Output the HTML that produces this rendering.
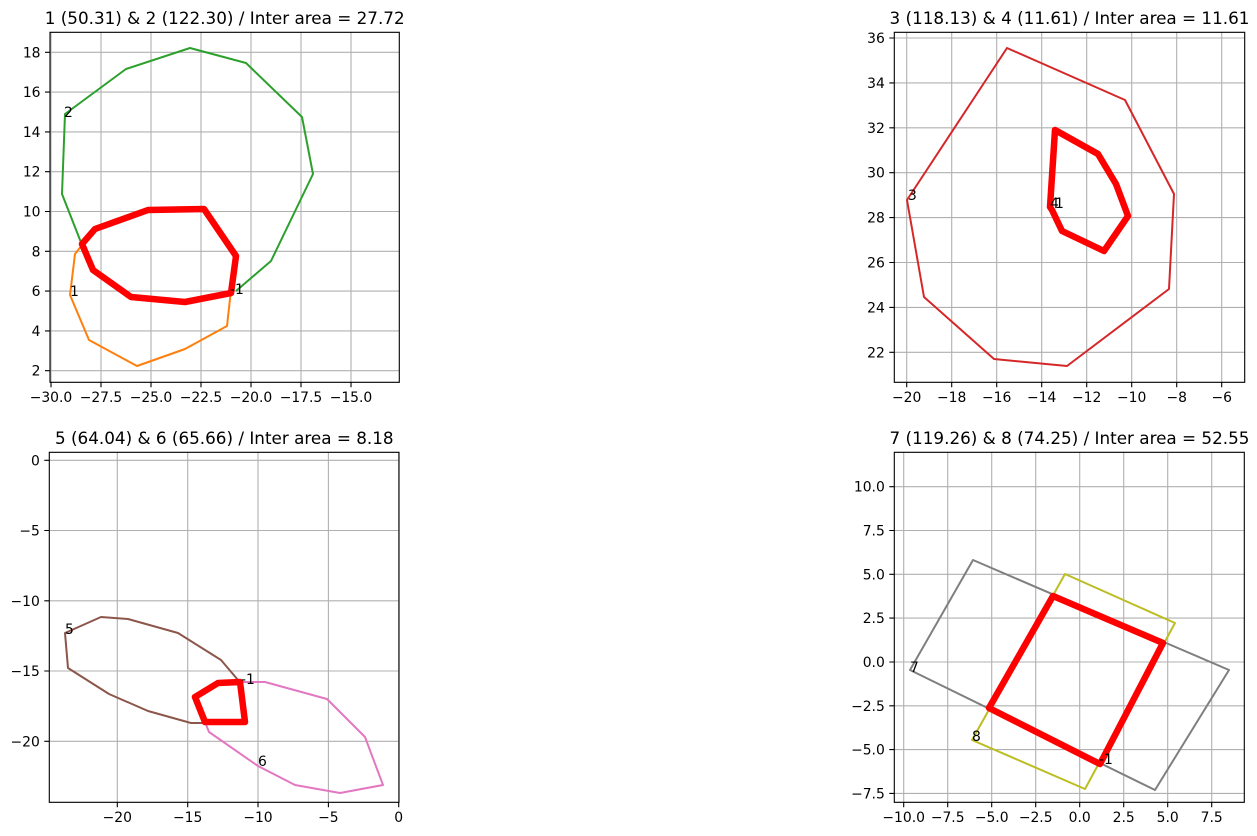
<!DOCTYPE html>
<html><head><meta charset="utf-8"><style>
html,body{margin:0;padding:0;background:#fff;}
svg{display:block;}
text{font-family:"DejaVu Sans","Liberation Sans",sans-serif;fill:#000;}
.t{font-size:16.8px;text-anchor:middle;}
.xl{font-size:13.9px;text-anchor:middle;}
.yl{font-size:13.9px;text-anchor:end;}
.a{font-size:13.9px;}
.g{stroke:#b0b0b0;stroke-width:1.1;fill:none;}
.k{stroke:#000;stroke-width:1.1;fill:none;}
.p{fill:none;stroke-width:2;stroke-linejoin:round;}
.r{fill:none;stroke:#ff0000;stroke-width:6.5;stroke-linejoin:round;}
</style></head><body>
<svg width="1257" height="836" viewBox="0 0 1257 836" xmlns="http://www.w3.org/2000/svg">
<!-- Subplot 1 -->
<text class="t" x="224.7" y="24">1 (50.31) &amp; 2 (122.30) / Inter area = 27.72</text>
<path class="g" d="M51 32.3V382.3M101 32.3V382.3M151 32.3V382.3M201 32.3V382.3M251 32.3V382.3M301 32.3V382.3M351 32.3V382.3M50 370.7H399.3M50 330.9H399.3M50 291.1H399.3M50 251.3H399.3M50 211.5H399.3M50 171.7H399.3M50 131.9H399.3M50 92.1H399.3M50 52.3H399.3"/>
<path class="p" stroke="#2ca02c" d="M82 245L62 194L65 114L126 69L190 48L246 63L302 117L313 174L271 261L236 291"/>
<path class="p" stroke="#ff7f0e" d="M82 245L75 254L70 295L89 340L137 366L185 349L227 326L231 290"/>
<path class="r" d="M148 210L204 209L236 256L231 293L185 302L131 297L93 270L82 244L95 229Z"/>
<text class="a" x="64" y="117">2</text><text class="a" x="70" y="296">1</text><text class="a" x="230" y="294">-1</text>
<path class="k" d="M50 32.3H399.3V382.3H50Z"/>
<path class="k" d="M51 382.3v5M101 382.3v5M151 382.3v5M201 382.3v5M251 382.3v5M301 382.3v5M351 382.3v5M50 370.7h-5M50 330.9h-5M50 291.1h-5M50 251.3h-5M50 211.5h-5M50 171.7h-5M50 131.9h-5M50 92.1h-5M50 52.3h-5"/>
<text class="xl" x="51" y="402">−30.0</text><text class="xl" x="101" y="402">−27.5</text><text class="xl" x="151" y="402">−25.0</text><text class="xl" x="201" y="402">−22.5</text><text class="xl" x="251" y="402">−20.0</text><text class="xl" x="301" y="402">−17.5</text><text class="xl" x="351" y="402">−15.0</text>
<text class="yl" x="40.5" y="375.7">2</text><text class="yl" x="40.5" y="335.9">4</text><text class="yl" x="40.5" y="296.1">6</text><text class="yl" x="40.5" y="256.3">8</text><text class="yl" x="40.5" y="216.5">10</text><text class="yl" x="40.5" y="176.7">12</text><text class="yl" x="40.5" y="136.9">14</text><text class="yl" x="40.5" y="97.1">16</text><text class="yl" x="40.5" y="57.3">18</text>

<!-- Subplot 2 -->
<text class="t" x="1069.5" y="24">3 (118.13) &amp; 4 (11.61) / Inter area = 11.61</text>
<path class="g" d="M906.7 32.3V382.3M951.7 32.3V382.3M996.7 32.3V382.3M1041.7 32.3V382.3M1086.7 32.3V382.3M1131.7 32.3V382.3M1176.7 32.3V382.3M1221.7 32.3V382.3M894.3 352.3H1244.7M894.3 307.4H1244.7M894.3 262.5H1244.7M894.3 217.6H1244.7M894.3 172.7H1244.7M894.3 127.8H1244.7M894.3 82.9H1244.7M894.3 38H1244.7"/>
<path class="p" stroke="#d62728" d="M1007 48L1125 100L1174 194L1169 289L1067 366L994 359L924 297L907 200Z"/>
<path class="r" d="M1055 130L1098 154L1116 184L1128 216L1104 251L1062 231L1052 210L1050 207Z"/>
<text class="a" x="908" y="200">3</text><text class="a" x="1050" y="208">4</text><text class="a" x="1055" y="208">1</text>
<path class="k" d="M894.3 32.3H1244.7V382.3H894.3Z"/>
<path class="k" d="M906.7 382.3v5M951.7 382.3v5M996.7 382.3v5M1041.7 382.3v5M1086.7 382.3v5M1131.7 382.3v5M1176.7 382.3v5M1221.7 382.3v5M894.3 352.3h-5M894.3 307.4h-5M894.3 262.5h-5M894.3 217.6h-5M894.3 172.7h-5M894.3 127.8h-5M894.3 82.9h-5M894.3 38h-5"/>
<text class="xl" x="906.7" y="402">−20</text><text class="xl" x="951.7" y="402">−18</text><text class="xl" x="996.7" y="402">−16</text><text class="xl" x="1041.7" y="402">−14</text><text class="xl" x="1086.7" y="402">−12</text><text class="xl" x="1131.7" y="402">−10</text><text class="xl" x="1176.7" y="402">−8</text><text class="xl" x="1221.7" y="402">−6</text>
<text class="yl" x="884.8" y="357.3">22</text><text class="yl" x="884.8" y="312.4">24</text><text class="yl" x="884.8" y="267.5">26</text><text class="yl" x="884.8" y="222.6">28</text><text class="yl" x="884.8" y="177.7">30</text><text class="yl" x="884.8" y="132.8">32</text><text class="yl" x="884.8" y="87.9">34</text><text class="yl" x="884.8" y="43">36</text>

<!-- Subplot 3 -->
<text class="t" x="224.3" y="444">5 (64.04) &amp; 6 (65.66) / Inter area = 8.18</text>
<path class="g" d="M117.3 452.3V802.3M187.7 452.3V802.3M258 452.3V802.3M328.4 452.3V802.3M398.7 452.3V802.3M49.3 460.3H399M49.3 530.5H399M49.3 600.8H399M49.3 671H399M49.3 741.3H399"/>
<path class="p" stroke="#8c564b" d="M238 680L221 660L178 633L128 619L101 617L65 633L68 668L109 694L148 711L191 723L205 723"/>
<path class="p" stroke="#e377c2" d="M243 682L265 682L327 699L365 737L383 785L340 793L295 785L258 766L209 732L205 722"/>
<path class="r" d="M218 683L240 682L245 722L205 722L195 697Z"/>
<text class="a" x="65" y="634">5</text><text class="a" x="241" y="684">-1</text><text class="a" x="258" y="766">6</text>
<path class="k" d="M49.3 452.3H399V802.3H49.3Z"/>
<path class="k" d="M117.3 802.3v5M187.7 802.3v5M258 802.3v5M328.4 802.3v5M398.7 802.3v5M49.3 460.3h-5M49.3 530.5h-5M49.3 600.8h-5M49.3 671h-5M49.3 741.3h-5"/>
<text class="xl" x="117.3" y="822">−20</text><text class="xl" x="187.7" y="822">−15</text><text class="xl" x="258" y="822">−10</text><text class="xl" x="328.4" y="822">−5</text><text class="xl" x="398.7" y="822">0</text>
<text class="yl" x="39.8" y="465.3">0</text><text class="yl" x="39.8" y="535.5">−5</text><text class="yl" x="39.8" y="605.8">−10</text><text class="yl" x="39.8" y="676">−15</text><text class="yl" x="39.8" y="746.3">−20</text>

<!-- Subplot 4 -->
<text class="t" x="1069.5" y="444">7 (119.26) &amp; 8 (74.25) / Inter area = 52.55</text>
<path class="g" d="M903.7 452.3V802.3M947.7 452.3V802.3M991.7 452.3V802.3M1035.7 452.3V802.3M1079.7 452.3V802.3M1123.7 452.3V802.3M1167.7 452.3V802.3M1211.7 452.3V802.3M894.3 486.7H1244.3M894.3 530.5H1244.3M894.3 574.3H1244.3M894.3 618.1H1244.3M894.3 662H1244.3M894.3 705.8H1244.3M894.3 749.6H1244.3M894.3 793.4H1244.3"/>
<path class="p" stroke="#7f7f7f" d="M973 560L1229 670L1155 790L910 670Z"/>
<path class="p" stroke="#bcbd22" d="M1065 574L1175 623L1085 789L972 740Z"/>
<path class="r" d="M1053 596L1163 643L1100 764L989 708Z"/>
<text class="a" x="910" y="672">7</text><text class="a" x="972" y="741">8</text><text class="a" x="1099" y="764">-1</text>
<path class="k" d="M894.3 452.3H1244.3V802.3H894.3Z"/>
<path class="k" d="M903.7 802.3v5M947.7 802.3v5M991.7 802.3v5M1035.7 802.3v5M1079.7 802.3v5M1123.7 802.3v5M1167.7 802.3v5M1211.7 802.3v5M894.3 486.7h-5M894.3 530.5h-5M894.3 574.3h-5M894.3 618.1h-5M894.3 662h-5M894.3 705.8h-5M894.3 749.6h-5M894.3 793.4h-5"/>
<text class="xl" x="903.7" y="822">−10.0</text><text class="xl" x="947.7" y="822">−7.5</text><text class="xl" x="991.7" y="822">−5.0</text><text class="xl" x="1035.7" y="822">−2.5</text><text class="xl" x="1079.7" y="822">0.0</text><text class="xl" x="1123.7" y="822">2.5</text><text class="xl" x="1167.7" y="822">5.0</text><text class="xl" x="1211.7" y="822">7.5</text>
<text class="yl" x="884.8" y="491.7">10.0</text><text class="yl" x="884.8" y="535.5">7.5</text><text class="yl" x="884.8" y="579.3">5.0</text><text class="yl" x="884.8" y="623.1">2.5</text><text class="yl" x="884.8" y="667">0.0</text><text class="yl" x="884.8" y="710.8">−2.5</text><text class="yl" x="884.8" y="754.6">−5.0</text><text class="yl" x="884.8" y="798.4">−7.5</text>
</svg>
</body></html>
